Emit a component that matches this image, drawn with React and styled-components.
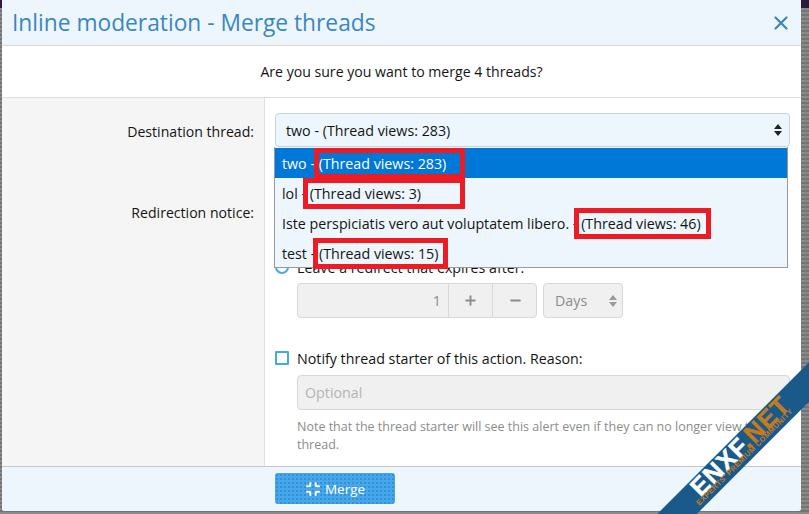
import React from "react";
import styled, {createGlobalStyle} from "styled-components";
import {X, Minimize, Plus, Minus} from "lucide-react";

const GlobalStyle = createGlobalStyle`
  html, body {
    margin: 0;
    padding: 0;
    height: 514px;
    overflow: hidden;
    background: #6f6f6f;
    font-family: "Open Sans", "Noto Sans", "Liberation Sans", sans-serif;
  }
  * {
    box-sizing: border-box;
  }
`;

const Page = styled.div`
  position: relative;
  width: 809px;
  height: 514px;
  padding: 0 8px 3px 2px;
  overflow: hidden;
  background:
    linear-gradient(#2b1b3d, #2b1b3d) top / 100% 8px no-repeat,
    repeating-linear-gradient(0deg, #8a8a8a 0 2px, #747474 2px 4px);
`;

const Dialog = styled.div`
  display: flex;
  flex-direction: column;
  height: 511px;
  background: #fff;
  color: #141414;
  font-size: 14.25px;
  border-radius: 0 0 3px 3px;
  overflow: hidden;
`;

const Header = styled.div`
  display: flex;
  justify-content: space-between;
  align-items: center;
  height: 46px;
  padding: 0 9px 0 10px;
  background: #edf6fd;
  border-bottom: 1px solid #d8d8d8;
`;

const Title = styled.h2`
  margin: 0;
  font-size: 22.75px;
  font-weight: 400;
  color: #3a87c0;
`;

const Close = styled(X)`
  color: #3a87c0;
`;

const Message = styled.div`
  height: 52px;
  display: flex;
  align-items: center;
  justify-content: center;
  font-size: 14.1px;
  border-bottom: 1px solid #dfdfdf;
`;

const Form = styled.div`
  flex: 1;
  display: grid;
  grid-template-columns: 263px 1fr;
  min-height: 0;
`;

const Labels = styled.div`
  background: #f5f5f5;
  border-right: 1px solid #dfdfdf;
  padding: 24px 10px 0 0;
  text-align: right;
  font-size: 14.1px;
`;

const Label = styled.div`
  height: 81px;
`;

const Fields = styled.div`
  position: relative;
  padding: 15px 11px 0 10px;
`;

const SelectBox = styled.div`
  display: flex;
  justify-content: space-between;
  align-items: center;
  height: 34px;
  padding: 0 5px 0 10px;
  background: #edf6fd;
  border: 1px solid #c9d3dc;
  border-radius: 4px;
`;

const Dropdown = styled.div`
  position: absolute;
  left: 9px;
  top: 49px;
  width: 514px;
  height: 121px;
  padding-top: 1px;
  background: #edf6fd;
  border: 1px solid #9a9a9a;
  border-top: 0;
  z-index: 2;
`;

const Option = styled.div`
  display: flex;
  align-items: center;
  height: 30px;
  padding-left: 7px;
  white-space: pre;
  background: ${p => (p.$active ? "#0078d7" : "transparent")};
  color: ${p => (p.$active ? "#fff" : "#141414")};
`;

const Marked = styled.span`
  position: relative;

  &::after {
    content: "";
    position: absolute;
    top: ${p => p.$top}px;
    bottom: ${p => p.$bottom}px;
    left: ${p => p.$left}px;
    right: ${p => p.$right}px;
    border: 5px solid #ed1c24;
  }
`;

const RadioRow = styled.div`
  display: flex;
  align-items: center;
  gap: 8px;
  margin-top: 110px;
  height: 20px;
`;

const Radio = styled.span`
  width: 14px;
  height: 14px;
  border: 2px solid #47a7eb;
  border-radius: 50%;
`;

const SpinRow = styled.div`
  display: flex;
  gap: 6px;
  margin: 6px 0 0 22px;
`;

const SpinGroup = styled.div`
  display: grid;
  grid-template-columns: 150px 44px 46px;
  width: 240px;
  height: 35px;
  background: #f0f0f0;
  border: 1px solid #d8d8d8;
  border-radius: 4px;
  color: #8c8c8c;
`;

const SpinValue = styled.div`
  display: flex;
  align-items: center;
  justify-content: flex-end;
  padding-right: 7px;
`;

const SpinButton = styled.div`
  display: flex;
  align-items: center;
  justify-content: center;
  border-left: 1px solid #d8d8d8;
`;

const UnitSelect = styled.div`
  display: flex;
  justify-content: space-between;
  align-items: center;
  width: 80px;
  height: 35px;
  padding: 0 3px 0 11px;
  background: #f0f0f0;
  border: 1px solid #d8d8d8;
  border-radius: 4px;
  color: #8c8c8c;
`;

const CheckRow = styled.div`
  display: flex;
  align-items: center;
  gap: 8px;
  margin-top: 30px;
  height: 20px;
`;

const Checkbox = styled.span`
  width: 14px;
  height: 14px;
  background: #fff;
  border: 2px solid #47a7eb;
  border-radius: 1px;
`;

const ReasonInput = styled.div`
  display: flex;
  align-items: center;
  height: 35px;
  margin: 7px 0 0 22px;
  padding-left: 7px;
  background: #f0f0f0;
  border: 1px solid #d8d8d8;
  border-radius: 4px;
  color: #b4b4b4;
`;

const Note = styled.div`
  margin: 8px 0 0 22px;
  font-size: 12.5px;
  line-height: 18px;
  color: #8c8c8c;
`;

const Footer = styled.div`
  display: flex;
  height: 45px;
  padding: 6px 0 0 273px;
  background: #edf6fd;
  border-top: 1px solid #c8c8c8;
`;

const MergeButton = styled.div`
  display: flex;
  align-items: center;
  justify-content: center;
  gap: 4px;
  width: 120px;
  height: 31px;
  font-size: 13.5px;
  color: #fff;
  border-radius: 3px;
  background-color: #47a7eb;
  background-image: radial-gradient(#2f8fd6 0.7px, transparent 0.8px);
  background-size: 4px 4px;
`;

const Ribbon = styled.div`
  position: absolute;
  left: 590px;
  top: 437px;
  width: 300px;
  height: 28px;
  display: flex;
  flex-direction: column;
  align-items: center;
  background: #1a5a8a;
  transform: rotate(-45deg);
  z-index: 3;
  white-space: nowrap;
`;

const RibbonName = styled.div`
  font-family: "Liberation Sans", sans-serif;
  font-size: 25px;
  line-height: 21px;
  font-weight: 700;
  letter-spacing: 1px;
  -webkit-text-stroke: 0.5px currentColor;
  color: #fff;
  margin-left: 7px;
`;

const RibbonDomain = styled.span`
  color: #c47a20;
`;

const RibbonTag = styled.div`
  font-family: "Liberation Sans", sans-serif;
  font-size: 7.5px;
  line-height: 8px;
  font-weight: 700;
  letter-spacing: 0.4px;
  color: #c47a20;
  margin: -3px 0 0 -2px;
`;

const Updown = ({color}) => (
  <svg width="12" height="14" viewBox="0 0 12 14">
    <path d="M6 1 L10 6 H2 Z M6 13 L2 8 H10 Z" fill={color}/>
  </svg>
);

const App = () => {
  return (
    <Page>
      <GlobalStyle/>
      <Dialog>
        <Header>
          <Title>Inline moderation - Merge threads</Title>
          <Close size={22} strokeWidth={2.4}/>
        </Header>
        <Message>Are you sure you want to merge 4 threads?</Message>
        <Form>
          <Labels>
            <Label>Destination thread:</Label>
            <Label>Redirection notice:</Label>
          </Labels>
          <Fields>
            <SelectBox>
              two - (Thread views: 283)
              <Updown color="#222"/>
            </SelectBox>
            <Dropdown>
              <Option $active>two - <Marked $top={-6} $bottom={-6} $left={-5} $right={-19}>(Thread views: 283)</Marked></Option>
              <Option>lol - <Marked $top={-6} $bottom={-6} $left={-7} $right={-44}>(Thread views: 3)</Marked></Option>
              <Option>Iste perspiciatis vero aut voluptatem libero. - <Marked $top={-6} $bottom={-6} $left={-7} $right={-10}>(Thread views: 46)</Marked></Option>
              <Option>test - <Marked $top={-6} $bottom={-6} $left={-6} $right={-10}>(Thread views: 15)</Marked></Option>
            </Dropdown>
            <RadioRow>
              <Radio/>
              Leave a redirect that expires after:
            </RadioRow>
            <SpinRow>
              <SpinGroup>
                <SpinValue>1</SpinValue>
                <SpinButton><Plus size={15} strokeWidth={3}/></SpinButton>
                <SpinButton><Minus size={15} strokeWidth={3}/></SpinButton>
              </SpinGroup>
              <UnitSelect>
                Days
                <Updown color="#9a9a9a"/>
              </UnitSelect>
            </SpinRow>
            <CheckRow>
              <Checkbox/>
              Notify thread starter of this action. Reason:
            </CheckRow>
            <ReasonInput>Optional</ReasonInput>
            <Note>Note that the thread starter will see this alert even if they can no longer view their thread.</Note>
          </Fields>
        </Form>
        <Footer>
          <MergeButton>
            <Minimize size={16} strokeWidth={3}/>
            Merge
          </MergeButton>
        </Footer>
      </Dialog>
      <Ribbon>
        <RibbonName>ENXF<RibbonDomain>.NET</RibbonDomain></RibbonName>
        <RibbonTag>EXPERTS' PREMIUM COMMUNITY</RibbonTag>
      </Ribbon>
    </Page>
  );
};

export default App;
